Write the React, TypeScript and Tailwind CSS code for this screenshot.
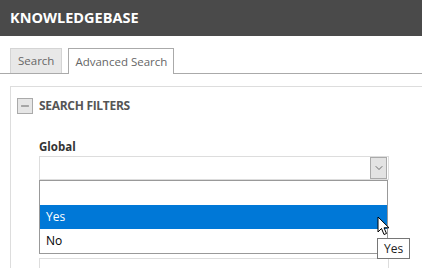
import { ChevronDown, Minus } from 'lucide-react';

const options = ['', 'Yes', 'No'];

export default function App() {
  const selected = 'Yes';

  return (
    <div className="relative w-[422px] h-[268px] overflow-hidden bg-white font-['Open_Sans',sans-serif] text-[#333]">
      {/* Header */}
      <header className="h-9 bg-[#4a4a4a] px-[10px] flex items-center">
        <h1 className="text-white font-bold text-[14.5px]">KNOWLEDGEBASE</h1>
      </header>

      {/* Tabs */}
      <div className="mt-3 flex items-end gap-[6px] pl-[10px] border-b border-[#aaa] h-[26px]">
        <div className="h-[25px] px-[7px] flex items-center bg-[#e8e8e8] border border-[#d4d4d4] border-b-0 text-[11.5px] text-[#666]">
          Search
        </div>
        <div className="h-[26px] -mb-px px-[6px] flex items-center bg-white border border-[#aaa] border-b-0 text-[11.5px] text-[#666]">
          Advanced Search
        </div>
      </div>

      {/* Search filters panel */}
      <div className="mt-3 ml-[10px] border-l border-t border-[#ddd] pl-[6px] pt-[10px] h-[200px]">
        <div className="flex items-center gap-[6px]">
          <div className="w-4 h-4 bg-[#e6e6e6] border border-[#aaa] flex items-center justify-center">
            <Minus size={12} strokeWidth={2} className="text-[#666]" />
          </div>
          <span className="font-bold text-[12px] text-[#555] tracking-[-0.3px]">SEARCH FILTERS</span>
        </div>

        <div className="ml-[22px] mt-[24px] w-[350px]">
          <label className="block font-bold text-[11.5px] text-[#333] leading-[16px]">Global</label>
          <div className="relative mt-[1px]">
            <div className="h-[24px] border border-[#ddd] flex justify-end items-center pr-px">
              <div className="w-[17px] h-[22px] bg-[#e3e3e3] border border-[#aaa] flex items-center justify-center">
                <ChevronDown size={12} strokeWidth={1.5} className="text-[#444]" />
              </div>
            </div>

            {/* Open dropdown list */}
            <ul className="absolute left-0 top-[24px] w-[349px] bg-white border border-[#999] z-10">
              {options.map((o) => (
                <li
                  key={o || 'empty'}
                  className={
                    o === selected
                      ? 'h-[24px] px-[6px] flex items-center bg-[#0078d7] text-white text-[12px]'
                      : 'h-[24px] px-[6px] flex items-center text-black text-[12px]'
                  }
                >
                  {o}
                </li>
              ))}
            </ul>

            <label className="block mt-[60px] font-bold text-[11.5px] text-[#333] leading-[16px]">Content</label>
            <div className="h-[24px] mt-[2px] border border-[#ddd]" />
          </div>
        </div>
      </div>

      {/* Mouse cursor */}
      <svg className="absolute left-[377px] top-[216px] z-20" width="14" height="21" viewBox="0 0 14 21">
        <path
          d="M1 1 L1 16 L4.5 12.5 L7 18.5 L9.5 17.5 L7 11.8 L12 11.8 Z"
          fill="white"
          stroke="black"
          strokeWidth="1"
          strokeLinejoin="miter"
        />
      </svg>

      {/* Tooltip */}
      <div className="absolute left-[377px] top-[238px] z-20 h-[21px] px-[6px] bg-white border border-[#767676] flex items-center text-[12px] text-[#222]">
        Yes
      </div>
    </div>
  );
}
